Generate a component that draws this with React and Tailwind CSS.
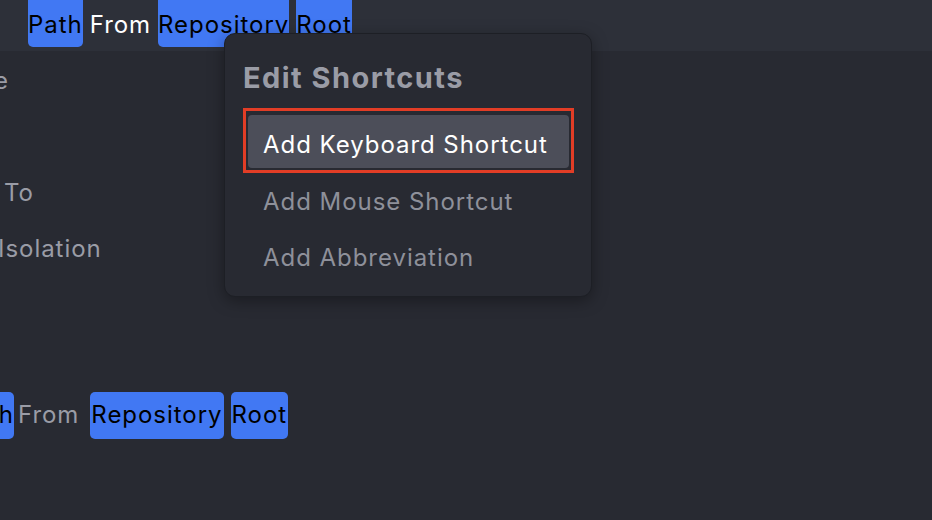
export default function App() {
  const font = { fontFamily: "Inter, 'Noto Sans', sans-serif" };

  return (
    <div className="relative w-[932px] h-[520px] overflow-hidden bg-[#282a32] text-[24px] tracking-[0.04em]" style={font}>
      {/* top row */}
      <div className="h-[51px] bg-[#2d3039] flex items-start pl-[28px] gap-[7px]">
        <span className="h-[47px] flex items-center pt-[2px] rounded-b-[5px] bg-[#4178f3] text-black">Path</span>
        <span className="h-[47px] flex items-center pt-[2px] text-white">From</span>
        <span className="h-[47px] flex items-center pt-[2px] rounded-b-[5px] bg-[#4178f3] text-black">Repository</span>
        <span className="h-[47px] flex items-center pt-[2px] rounded-b-[5px] bg-[#4178f3] text-black">Root</span>
      </div>

      {/* left list, clipped by the window edge */}
      <div className="flex flex-col text-[#9a9ca6]">
        <div className="h-[56px] flex items-center -ml-[6px] mt-[2px]">e</div>
        <div className="h-[56px]"></div>
        <div className="h-[56px] flex items-center ml-[4px]">To</div>
        <div className="h-[56px] flex items-center -ml-[2px]">Isolation</div>
        <div className="h-[56px]"></div>
        <div className="h-[56px]"></div>
        <div className="h-[56px] flex items-center gap-[7px] -mt-[2px]">
          <span className="h-[47px] w-[14px] flex items-center justify-end overflow-hidden rounded-r-[5px] bg-[#4178f3] text-black">h</span>
          <span className="-ml-[3px] mr-[4px]">From</span>
          <span className="h-[47px] px-[1px] flex items-center rounded-[5px] bg-[#4178f3] text-black">Repository</span>
          <span className="h-[47px] px-[1px] flex items-center rounded-[5px] bg-[#4178f3] text-black">Root</span>
        </div>
      </div>

      {/* popup */}
      <div className="absolute left-[224px] top-[33px] w-[368px] h-[264px] rounded-[11px] border border-[#1d1f25] bg-[#282a32] shadow-[0_4px_16px_rgba(0,0,0,0.35)] pl-[18px] pr-[17px] pt-[27px]">
        <div className="h-[34px] flex items-center font-bold text-[29px] tracking-[0.05em] text-[#9a9ca6]">Edit Shortcuts</div>
        <div className="mt-[13px] h-[65px] border-[3px] border-[#e23d26] pl-[2px] pr-[2px] pt-[4px] pb-[2px]">
          <div className="h-full rounded-[4px] bg-[#4c4e59] flex items-center pl-[15px] pt-[6px] text-white">Add Keyboard Shortcut</div>
        </div>
        <div className="h-[47px] flex items-center pl-[20px] mt-[5px] text-[#8e909a]">Add Mouse Shortcut</div>
        <div className="h-[56px] flex items-center pl-[20px] mt-[5px] text-[#8e909a]">Add Abbreviation</div>
      </div>
    </div>
  );
}
